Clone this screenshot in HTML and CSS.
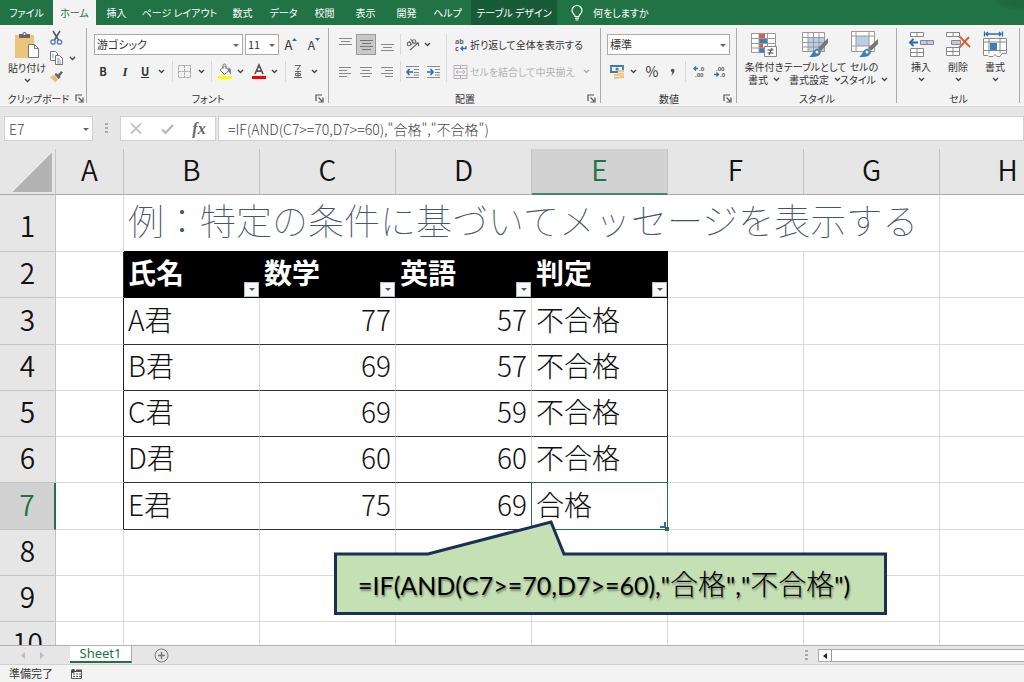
FILE: index.html
```html
<!DOCTYPE html>
<html lang="ja">
<head>
<meta charset="utf-8">
<title>Sheet1</title>
<meta name="viewport" content="width=device-width, initial-scale=1">
<link rel="stylesheet" href="styles.css">
</head>
<body>
<svg class="defs" aria-hidden="true">
  <symbol id="chev" viewBox="0 0 7 5"><path d="M1 1l2.500 2.500L6 1" fill="none" stroke="#444" stroke-width="1.300"/></symbol>
  <symbol id="launch" viewBox="0 0 9 9"><path d="M1 7V1h6M3.500 3.500L7 7M8 3.500V8H3.500" fill="none" stroke="#555" stroke-width="1.200"/></symbol>
</svg>
<div class="app">
  <nav class="tabs">
    <button class="t-file">ファイル</button>
    <button class="t-home active">ホーム</button>
    <button>挿入</button>
    <button class="t-page">ページ レイアウト</button>
    <button>数式</button>
    <button>データ</button>
    <button>校閲</button>
    <button>表示</button>
    <button>開発</button>
    <button>ヘルプ</button>
    <button class="t-design">テーブル デザイン</button>
    <button class="t-tell"><svg width="12" height="16" viewBox="0 0 12 16" fill="none" stroke="#fff" stroke-width="1.200"><path d="M4 11.500C4 9 1 8.500 1 5.500a5 5 0 0 1 10 0C11 8.500 8 9 8 11.500zM4 13.200h4M4.500 15h3"/></svg>何をしますか</button>
  </nav>

  <div class="ribbon">
    <section class="group g-clip">
      <div class="clip-body">
        <button class="big">
          <svg width="26" height="28" viewBox="0 0 26 28"><path d="M1 4h19v23H1z" fill="#ecc57c"/><path d="M5 3h3.500a2 2 0 0 1 4 0H16v4H5z" fill="#666"/><circle cx="10.500" cy="3" r="1" fill="#f3f3f3"/><path d="M14.500 13.500h6l4 4v9h-10z" fill="#fff" stroke="#777"/><path d="M20.500 13.500v4h4" fill="none" stroke="#777"/></svg>
          <span>貼り付け</span>
          <svg width="7" height="5"><use href="#chev"/></svg>
        </button>
        <div class="clip-side">
          <button aria-label="切り取り"><svg width="13" height="14" viewBox="0 0 13 14" fill="none"><path d="M3 0l5.500 9M10 0L4.500 9" stroke="#555" stroke-width="1.500"/><circle cx="3" cy="11" r="2.200" stroke="#4a7fb8" stroke-width="1.300"/><circle cx="9.500" cy="11" r="2.200" stroke="#4a7fb8" stroke-width="1.300"/></svg></button>
          <button aria-label="コピー"><svg width="13" height="14" viewBox="0 0 13 14" fill="#fff" stroke="#777"><path d="M.5.5h5l2 2v7h-7z"/><path d="M5.500 4.500h4l3 3v6h-7z"/><path d="M2 4h2M2 6h2M7 8h3M7 10h4M7 12h4" stroke="#4a7fb8" stroke-width=".8"/></svg></button>
          <button class="more" aria-label="コピーの種類"><svg width="7" height="5"><use href="#chev"/></svg></button>
          <button aria-label="書式のコピー"><svg width="13" height="12" viewBox="0 0 13 12"><path d="M0 6l4-2 4 4-2.500 3.500z" fill="#e9bd76"/><path d="M4.500 3.500L6 2l2 1.500L11 0l2 1.500L10 5l.5 1.500L8.500 8z" fill="#666"/></svg></button>
        </div>
      </div>
      <footer><span>クリップボード</span><svg width="9" height="9"><use href="#launch"/></svg></footer>
    </section>

    <section class="group g-font">
      <div class="rows">
        <div class="row font-a">
          <label class="drop"><select aria-label="フォント名"><option>游ゴシック</option></select></label>
          <label class="drop size"><select aria-label="フォント サイズ"><option>11</option></select></label>
          <button aria-label="拡大" class="grow">A<svg width="5" height="3" viewBox="0 0 5 3"><path d="M0 3l2.500-3L5 3z" fill="#2b6cb0"/></svg></button>
          <button aria-label="縮小" class="grow small">A<svg width="5" height="3" viewBox="0 0 5 3"><path d="M0 0l2.500 3L5 0z" fill="#2b6cb0"/></svg></button>
        </div>
        <div class="row font-b">
          <button class="b">B</button><button class="i">I</button><button class="u">U</button>
          <button aria-label="下線"><svg width="7" height="5"><use href="#chev"/></svg></button>
          <i class="sep"></i>
          <button aria-label="罫線"><svg width="13" height="13" viewBox="0 0 13 13" fill="none" stroke="#aaa"><path d="M.5.5h12v12H.5zM6.500 0v13M0 6.500h13" stroke-dasharray="3 .6"/></svg></button>
          <button aria-label="罫線の種類"><svg width="7" height="5"><use href="#chev"/></svg></button>
          <i class="sep"></i>
          <button aria-label="塗りつぶし"><svg width="14" height="15" viewBox="0 0 14 15"><path d="M2 6l4.500-4L11 6.500 6.500 10.500z" fill="#fff" stroke="#777"/><path d="M5 5V1.500a1.500 1.500 0 0 1 3 0V5" fill="none" stroke="#777"/><path d="M10 3.500c3 .5 3.500 3 2.500 7L10.500 7z" fill="#4a7fb8"/><path d="M0 12h14v3H0z" fill="#ff0"/></svg></button>
          <button aria-label="塗りつぶしの色"><svg width="7" height="5"><use href="#chev"/></svg></button>
          <button aria-label="フォントの色"><svg width="14" height="15" viewBox="0 0 14 15"><path d="M3 10L7 1l4 9M4.500 7.200h5" fill="none" stroke="#555" stroke-width="1.700"/><path d="M0 12h14v3H0z" fill="red"/></svg></button>
          <button aria-label="色の選択"><svg width="7" height="5"><use href="#chev"/></svg></button>
          <i class="sep"></i>
          <button aria-label="ふりがな"><svg width="8" height="13" viewBox="0 0 8 13" fill="none" stroke="#666"><path d="M1 .5h5.500L3 5M4 3v2M1 6.500h6M1.500 8.500h5v2h-5zM4 6.500v6M0 12.500h8"/></svg></button>
          <button aria-label="ふりがなの表示"><svg width="7" height="5"><use href="#chev"/></svg></button>
        </div>
      </div>
      <footer><span>フォント</span><svg width="9" height="9"><use href="#launch"/></svg></footer>
    </section>

    <section class="group g-align">
      <div class="align-body">
        <div class="rows">
          <div class="row align-a">
            <button class="top" aria-label="上揃え"><svg width="13" height="8" viewBox="0 0 13 8" stroke="#888"><path d="M0 .5h13M2 3.500h9M0 6.500h13"/></svg></button>
            <button class="on" aria-label="上下中央揃え"><svg width="13" height="10" viewBox="0 0 13 10" stroke="#777"><path d="M0 .5h13M2 3.500h9M0 6.500h13M2 9.500h9"/></svg></button>
            <button class="bottom" aria-label="下揃え"><svg width="13" height="8" viewBox="0 0 13 8" stroke="#888"><path d="M0 .5h13M2 3.500h9M0 6.500h13"/></svg></button>
            <i class="sep"></i>
            <button aria-label="方向"><svg width="14" height="13" viewBox="0 0 14 13" fill="none" stroke="#666" stroke-width="1.100"><circle cx="3" cy="6" r="1.800"/><path d="M3 3l3 4M4.500 1l4 5"/><circle cx="8" cy="3.500" r="1.800"/><path d="M4 12l8-7M9.500 5H12.500v3"/></svg></button>
            <button aria-label="方向の選択"><svg width="7" height="5"><use href="#chev"/></svg></button>
          </div>
          <div class="row align-b">
            <button aria-label="左揃え"><svg width="12" height="10" viewBox="0 0 12 10" stroke="#888"><path d="M0 .5h12M0 3.500h8M0 6.500h12M0 9.500h8"/></svg></button>
            <button aria-label="中央揃え"><svg width="12" height="10" viewBox="0 0 12 10" stroke="#888"><path d="M0 .5h12M2 3.500h8M0 6.500h12M2 9.500h8"/></svg></button>
            <button aria-label="右揃え"><svg width="12" height="10" viewBox="0 0 12 10" stroke="#888"><path d="M0 .5h12M4 3.500h8M0 6.500h12M4 9.500h8"/></svg></button>
            <i class="sep"></i>
            <button aria-label="インデントを減らす"><svg width="14" height="12" viewBox="0 0 14 12" fill="none" stroke="#888"><path d="M0 .5h13M8 3.500h5M8 6.500h5M8 9h5M0 11.500h13"/><path d="M7 6H1M3.500 3L1 6l2.500 3" stroke="#2b6cb0" stroke-width="1.700"/></svg></button>
            <button aria-label="インデントを増やす"><svg width="14" height="12" viewBox="0 0 14 12" fill="none" stroke="#888"><path d="M0 .5h13M8 3.500h5M8 6.500h5M8 9h5M0 11.500h13"/><path d="M0 6h6M3.500 3L6 6 3.500 9" stroke="#2b6cb0" stroke-width="1.700"/></svg></button>
          </div>
        </div>
        <div class="rows wide">
          <div class="row"><button class="text"><svg width="15" height="18" viewBox="0 0 15 18"><text x="2" y="8" class="ic">ab</text><text x="2" y="15" class="ic">c</text><path d="M13 10v2.500H8M10 10.500l-2 2 2 2" fill="none" stroke="#2b6cb0" stroke-width="1.300"/></svg>折り返して全体を表示する</button></div>
          <div class="row"><button class="text" disabled><svg width="15" height="14" viewBox="0 0 15 14" fill="none" stroke="#b9aebb"><path d="M1 .5h13v13H1zM1 3.500h13M1 10.500h13M7.500 0v3.500M7.500 10.500V14M3 7h9M5 5L3 7l2 2M10 5l2 2-2 2"/></svg>セルを結合して中央揃え<svg class="end" width="7" height="5"><use href="#chev"/></svg></button></div>
        </div>
      </div>
      <footer><span>配置</span><svg width="9" height="9"><use href="#launch"/></svg></footer>
    </section>

    <section class="group g-num">
      <div class="rows">
        <div class="row"><label class="drop fmt"><select aria-label="表示形式"><option>標準</option></select></label></div>
        <div class="row num-b">
          <button aria-label="通貨"><svg width="14" height="14" viewBox="0 0 14 14"><path d="M1 1h12v6H1z" fill="#fff" stroke="#3d78b8" stroke-width="1.800"/><circle cx="7" cy="4" r="1.600" fill="#3d78b8"/><path d="M8 5h6v8H8z" fill="#ecc57c"/><path d="M4 9h5v5H4z" fill="#ecc57c"/><path d="M8 7.500h6M8 10h6M4 11.500h5" stroke="#f3f3f3" stroke-width=".8"/></svg></button>
          <button aria-label="通貨の種類"><svg width="7" height="5"><use href="#chev"/></svg></button>
          <button class="pct">%</button>
          <button aria-label="桁区切り"><svg width="5" height="8" viewBox="0 0 5 8"><path d="M1 1.500C2 0 4.500.5 4.500 2.500S3 7 .8 7.500C2 6.500 2.500 5 2 4.200 1 4 .6 2.600 1 1.500z" fill="#555"/></svg></button>
          <i class="sep"></i>
          <button aria-label="小数点以下の桁数を増やす"><svg width="12" height="15" viewBox="0 0 12 15"><path d="M5 4.500H1M3 2.500l-2 2 2 2" fill="none" stroke="#2b6cb0" stroke-width="1.300"/><text x="6" y="7" class="dec">.0</text><text x="2" y="13" class="dec">.00</text></svg></button>
          <button aria-label="小数点以下の桁数を減らす"><svg width="12" height="15" viewBox="0 0 12 15"><text x="2" y="7" class="dec">.00</text><path d="M0 10.500h4M2.500 8.500l2 2-2 2" fill="none" stroke="#2b6cb0" stroke-width="1.300"/><text x="6" y="13" class="dec">.0</text></svg></button>
        </div>
      </div>
      <footer><span>数値</span><svg width="9" height="9"><use href="#launch"/></svg></footer>
    </section>

    <section class="group g-style">
      <div class="bigs">
        <button class="big"><svg width="26" height="27" viewBox="0 0 26 27"><path d="M.5 2.500h24v19H.5z" fill="#fff" stroke="#999"/><path d="M8 3h6v4.500H8zM8 12.500h4V17H8z" fill="#d9603f"/><path d="M8 7.500h8V12H8zM8 17h6v4.500H8z" fill="#3f7dbd"/><path d="M.5 7.500h24M.5 12.500h24M.5 17h24M8 2.500v19M16.500 2.500v19" fill="none" stroke="#999"/><path d="M13.500 15.500h12v10h-12z" fill="#fff" stroke="#888"/><path d="M16.500 19h6M16.500 22h6M21 17l-3 7" stroke="#444"/></svg><span>条件付き</span><span>書式<svg width="7" height="5"><use href="#chev"/></svg></span></button>
        <button class="big"><svg width="26" height="27" viewBox="0 0 26 27"><path d="M.5 1.500h22v19H.5z" fill="#fff"/><path d="M6 6h17v15H6z" fill="#b9cfe6"/><path d="M.5 1.500h22v19H.5zM.5 6.500h22M.5 11.500h22M.5 16h22M6 1.500v19M11.500 1.500v19M17 1.500v19" fill="none" stroke="#999"/><path d="M26 7v5l-7 8-3-3z" fill="#777"/><path d="M15.500 17.500l3.500 3c-.5 5-6 6-12 5.500 3-1.500 4-7.500 8.500-8.500z" fill="#3f7dbd"/><circle cx="15" cy="21" r="1.500" fill="#fff"/></svg><span>テーブルとして</span><span>書式設定<svg width="7" height="5"><use href="#chev"/></svg></span></button>
        <button class="big"><svg width="27" height="27" viewBox="0 0 27 27"><path d="M.5.5h23v20H.5z" fill="#fff" stroke="#999"/><path d="M5 5h13v10H5z" fill="#b9cfe6"/><path d="M5 .5v20M18 .5v20M.5 5h23M.5 15h23" fill="none" stroke="#999"/><path d="M27 8v5l-7 7-3-3z" fill="#777"/><path d="M16.500 17.500l3.500 3c-.5 5-6 6-12 5.500 3-1.500 4-7.500 8.500-8.500z" fill="#3f7dbd"/><circle cx="16" cy="21" r="1.500" fill="#fff"/></svg><span>セルの</span><span>スタイル<svg width="7" height="5"><use href="#chev"/></svg></span></button>
      </div>
      <footer><span>スタイル</span></footer>
    </section>

    <section class="group g-cell">
      <div class="bigs">
        <button class="big"><svg width="26" height="27" viewBox="0 0 26 27" fill="#fff" stroke="#888"><path d="M2.500 1.500h13v4h-13zM9 1.500v4M2.500 17.500h13v8h-13zM2.500 21.500h13M9 17.500v8"/><path d="M12.500 9.500h13v4h-13z" fill="#b9cfe6"/><path d="M19 9.500v4"/><path d="M10 11.500H2M5.500 8L2 11.500 5.500 15" fill="none" stroke="#2b6cb0" stroke-width="1.900"/></svg><span>挿入</span><svg width="7" height="5"><use href="#chev"/></svg></button>
        <button class="big"><svg width="26" height="27" viewBox="0 0 26 27" fill="#fff" stroke="#888"><path d="M1.500 1.500h13v4h-13zM8 1.500v4M1.500 16.500h13v8h-13zM1.500 20.500h13M8 16.500v8"/><path d="M6.500 9.500h9v4h-9z" fill="#b9cfe6"/><path d="M14 5l11 11M24 6L14 17" fill="none" stroke="#d9603f" stroke-width="2"/></svg><span>削除</span><svg width="7" height="5"><use href="#chev"/></svg></button>
        <button class="big"><svg width="26" height="27" viewBox="0 0 26 27" fill="#fff" stroke="#888"><path d="M2.500.5v5M20.500.5v5M4 3h15M6 1L4 3l2 2M17 1l2 2-2 2" fill="none" stroke="#2b6cb0" stroke-width="1.300"/><path d="M1.500 7.500h23v15H20l-2 3h-3l-2-2-2 2H7l-1-1H1.500z"/><path d="M7 7.500v15M18 7.500v15M1.500 11h23M1.500 19.500h23" fill="none"/><path d="M8 12h7v7H8z" fill="#3f7dbd" stroke="none"/></svg><span>書式</span><svg width="7" height="5"><use href="#chev"/></svg></button>
      </div>
      <footer><span>セル</span></footer>
    </section>
  </div>

  <div class="formula-bar">
    <label class="drop name"><input aria-label="名前ボックス" value="E7"></label>
    <i class="dots"></i>
    <div class="fx">
      <button aria-label="キャンセル"><svg width="12" height="11" viewBox="0 0 12 11"><path d="M1 .5l10 10M11 .5l-10 10" stroke="#b5b5b5" stroke-width="1.500"/></svg></button>
      <button aria-label="入力"><svg width="13" height="10" viewBox="0 0 13 10"><path d="M1 5.500l3.500 3.500L12 1" fill="none" stroke="#b5b5b5" stroke-width="2.200"/></svg></button>
      <button class="fn"><em>fx</em></button>
    </div>
    <input class="formula" aria-label="数式" value="=IF(AND(C7&gt;=70,D7&gt;=60),&quot;合格&quot;,&quot;不合格&quot;)">
  </div>

  <main class="sheet">
    <table>
      <colgroup><col class="c-head"><col class="c-a"><col><col><col><col><col><col><col></colgroup>
      <thead><tr><th class="corner"></th><th>A</th><th>B</th><th>C</th><th>D</th><th class="sel">E</th><th>F</th><th>G</th><th>H</th></tr></thead>
      <tbody>
        <tr class="title-row"><th>1</th><td></td><td colspan="4" class="title">例：特定の条件に基づいてメッセージを表示する</td><td class="open"></td><td></td><td></td></tr>
        <tr class="head-row"><th>2</th><td class="edge"></td><td class="h">氏名<button aria-label="氏名 フィルター"></button></td><td class="h">数学<button aria-label="数学 フィルター"></button></td><td class="h">英語<button aria-label="英語 フィルター"></button></td><td class="h">判定<button aria-label="判定 フィルター"></button></td><td></td><td></td><td></td></tr>
        <tr><th>3</th><td class="edge"></td><td class="d">A君</td><td class="d n">77</td><td class="d n">57</td><td class="d last">不合格</td><td></td><td></td><td></td></tr>
        <tr><th>4</th><td class="edge"></td><td class="d">B君</td><td class="d n">69</td><td class="d n">57</td><td class="d last">不合格</td><td></td><td></td><td></td></tr>
        <tr><th>5</th><td class="edge"></td><td class="d">C君</td><td class="d n">69</td><td class="d n">59</td><td class="d last">不合格</td><td></td><td></td><td></td></tr>
        <tr><th>6</th><td class="edge"></td><td class="d">D君</td><td class="d n">60</td><td class="d n">60</td><td class="d last">不合格</td><td></td><td></td><td></td></tr>
        <tr><th class="sel">7</th><td class="edge"></td><td class="d">E君</td><td class="d n">75</td><td class="d n">69</td><td class="d last cursor">合格</td><td></td><td></td><td></td></tr>
        <tr><th>8</th><td></td><td></td><td></td><td></td><td></td><td></td><td></td><td></td></tr>
        <tr><th>9</th><td></td><td></td><td></td><td></td><td></td><td></td><td></td><td></td></tr>
        <tr><th>10</th><td></td><td></td><td></td><td></td><td></td><td></td><td></td><td></td></tr>
      </tbody>
    </table>
    <div class="callout">
      <svg width="553" height="94" viewBox="0 0 553 94"><path d="M1.500 33H94L217 1l13 32h321.500v59.500H1.500z" fill="#c5e0b4" stroke="#1b2f57" stroke-width="3"/></svg>
      <p>=IF(AND(C7&gt;=70,D7&gt;=60),"<span>合格</span>","<span>不合格</span>")</p>
    </div>
  </main>

  <div class="sheet-tabs">
    <button class="nav" aria-label="前のシート"><svg width="4" height="7" viewBox="0 0 4 7"><path d="M4 0v7L0 3.500z" fill="#bbb"/></svg></button>
    <button class="nav" aria-label="次のシート"><svg width="4" height="7" viewBox="0 0 4 7"><path d="M0 0v7l4-3.500z" fill="#bbb"/></svg></button>
    <button class="tab">Sheet1</button>
    <button class="add" aria-label="新しいシート"><svg width="15" height="15" viewBox="0 0 15 15" fill="none" stroke="#777"><circle cx="7.500" cy="7.500" r="6.500"/><path d="M7.500 4v7M4 7.500h7" stroke-width="1.500"/></svg></button>
    <i class="dots"></i>
    <div class="scroll"><button aria-label="左へスクロール"><svg width="4" height="6" viewBox="0 0 4 6"><path d="M4 0v6L0 3z" fill="#222"/></svg></button><i></i></div>
  </div>
  <div class="status"><span>準備完了</span><svg width="11" height="10" viewBox="0 0 11 10"><path d="M.5 2.500h10v7H.5z" fill="#fff" stroke="#555"/><path d="M5 .5h6v2H5z" fill="#555"/><circle cx="2" cy="2" r="2" fill="#444"/><path d="M2 5h2M5 5h2M8 5h2M2 7.500h2M5 7.500h2M8 7.500h2" stroke="#555"/></svg></div>
</div>
</body>
</html>
```

FILE: styles.css
```css
* { box-sizing: border-box; }
body { margin: 0; font-family: "Noto Sans CJK JP", sans-serif; font-size: 11px; line-height: 13px; color: #333; background: #fff; }
button, input, select { font: inherit; color: inherit; margin: 0; padding: 0; border: 0; background: none; border-radius: 0; }
svg { display: block; flex: none; overflow: visible; }
.defs { position: absolute; width: 0; height: 0; }
.app { height: 100vh; display: flex; flex-direction: column; overflow: hidden; }
.tabs, .ribbon { font-size: 10px; font-feature-settings: "palt"; white-space: nowrap; }

.tabs { flex: none; display: flex; height: 25px; background: radial-gradient(ellipse 30px 12px at 100% 0, #1f673c 60%, #1f673c00), #217346; color: #fff; }
.tabs button { width: 41px; flex: none; }
.tabs .t-file { width: 53px; }
.tabs .t-home { width: 43px; }
.tabs .t-page { width: 85px; }
.tabs .active { background: #f3f3f3; color: #217346; }
.tabs .t-design { width: 86px; margin-left: 3px; background: #185c37; }
.tabs .t-tell { width: auto; margin-left: 14px; display: flex; align-items: center; gap: 10px; }

.ribbon { flex: none; display: flex; height: 82px; padding: 3px 0 1px; background: #f3f3f3; border-bottom: 1px solid #dadada; overflow: hidden; }
.group { flex: none; display: flex; flex-direction: column; background: linear-gradient(#ababab, #ababab) right top / 1px 75px no-repeat; }
.group > :first-child { flex: 1; }
.group footer { display: grid; grid-template-columns: 14px 1fr 14px; align-items: center; height: 14px; }
.group footer span { grid-column: 2; text-align: center; }
.g-clip { width: 87px; }
.g-clip footer { grid-template-columns: 2px 1fr 12px; }
.g-font { width: 242px; }
.g-align { width: 272px; }
.g-num { width: 136px; }
.g-style { width: 160px; }
.g-cell { width: 123px; }

.group button { display: flex; align-items: center; justify-content: center; min-width: 0; }
.group .big { flex-direction: column; justify-content: flex-start; align-items: center; }
.big > svg:first-child { margin-bottom: 2px; }
.big span { display: flex; align-items: center; gap: 5px; }
.big > svg:last-child { margin-top: 4px; }
.clip-body { display: flex; padding: 3px 0 0 7px; }
.clip-body .big { width: 40px; }
.clip-side { display: grid; grid-template-columns: 18px 14px; grid-template-rows: 14px 26px 12px; align-items: center; }
.clip-side button { grid-column: 1; }
.clip-side .more { grid-column: 2; grid-row: 2; }

.rows { display: flex; flex-direction: column; gap: 6px; padding: 6px 6px 0 7px; }
.row { display: grid; height: 21px; align-items: stretch; }
.font-a { grid-template-columns: 149px 34px 20px 22px; column-gap: 2px; }
.font-b { grid-template-columns: 18px 26px 14px 18px 4px 21px 12px 8px 19px 12px 25px 7px 14px 12px 20px; }
.align-a { grid-template-columns: 22px 20px 22px 5px 19px 10px; }
.align-b { grid-template-columns: 22px 20px 22px 5px 19px 24px; }
.num-b { grid-template-columns: 20px 12px 26px 14px 12px 15px 28px; }
.g-num .rows { padding-left: 6px; }
.sep { width: 1px; background: #d8d8d8; justify-self: center; }

.drop { position: relative; display: block; background: #fff; border: 1px solid #ababab; }
.drop select, .drop input { appearance: none; display: block; width: 100%; height: 100%; padding: 0 12px 0 2px; outline: 0; }
.drop select { font-size: 11px; font-feature-settings: "palt"; }
.drop::after { content: ""; position: absolute; right: 3px; top: 50%; margin-top: -1px; border: 3px solid transparent; border-top-color: #666; border-bottom: 0; pointer-events: none; }
.fmt { width: 123px; }
.group .grow { font-size: 13px; }
.grow svg { align-self: flex-start; margin-top: 4px; }
.group .small { font-size: 12px; }
.b { font-weight: 700; }
.group .b, .group .u { font-size: 11px; }
.group .i { font-family: "Liberation Serif", serif; font-style: italic; font-weight: 700; font-size: 13px; }
.u { font-weight: 700; text-decoration: underline; }
.group .pct { font-size: 14px; }
.group .top { padding-bottom: 6px; }
.on { background: #c8c8c8; }
.group .on { border: 1px solid #9a9a9a; }
.group .bottom { padding-top: 6px; }
.align-body { display: flex; }
.align-body .rows { width: 117px; padding: 6px 0 0 5px; }
.align-body .wide { width: 150px; padding-left: 7px; background: linear-gradient(#d8d8d8, #d8d8d8) left 6px / 1px 48px no-repeat; }
.group .text { justify-content: flex-start; gap: 2px; }
.text:disabled { color: #b3b3b3; }
.text .end { margin-left: 6px; opacity: .4; }
.ic { font: 700 7px "Noto Sans", sans-serif; fill: #666; }
.dec { font: 700 6px "Noto Sans", sans-serif; fill: #666; }
.bigs { display: grid; padding-top: 3px; }
.g-style .bigs { grid-template-columns: 50px 52px 46px; padding-left: 2px; }
.g-cell .bigs { grid-template-columns: 38px 36px 38px; padding-left: 5px; }

.formula-bar { flex: none; display: flex; height: 42px; padding: 9px 0 8px 4px; background: #e6e6e6; color: #444; font-size: 14px; font-weight: 300; }
.formula-bar > * { border: 1px solid #d0d0d0; background: #fff; }
.name { width: 89px; }
.name input { padding-left: 4px; }
.formula-bar .dots, .sheet-tabs .dots { width: 3px; height: 11px; border: 0; background: repeating-linear-gradient(#aaa 0 2px, transparent 2px 4px); align-self: center; }
.formula-bar .dots { margin: 0 12px; }
.fx { display: grid; grid-template-columns: 30px 32px 32px; margin-right: 2px; }
.fx button { display: flex; align-items: center; justify-content: center; }
.fx .fn { font-family: "Liberation Serif", serif; font-size: 16px; font-weight: 700; color: #666; }
.formula-bar .formula { flex: 1; min-width: 0; padding-left: 9px; }

.sheet { position: relative; flex: 1; min-height: 0; overflow: hidden; font-size: 28px; line-height: 40px; font-weight: 300; color: #111; }
table { table-layout: fixed; width: 1076px; border-collapse: separate; border-spacing: 0; }
col { width: 136px; }
.c-head { width: 56px; }
.c-a { width: 68px; }
th, td { height: 46px; padding: 0 0 5px; border-right: 1px solid #dadada; border-bottom: 1px solid #dadada; }
th { font-weight: 350; background: #e6e6e6; border-color: #c4c4c4; text-align: center; }
thead th { border-bottom-color: #ababab; }
tbody tr:nth-child(4n+3) > * { height: 47px; }
.corner { background: linear-gradient(135deg, transparent 50%, #b3b3b3 50%) 13px 4px / 39px 39px no-repeat #e6e6e6; }
.sel { background: #d2d2d2; color: #217346; }
thead .sel { padding-bottom: 4px; border-bottom: 2px solid #3f8a60; }
tbody .sel { border-right: 2px solid #217346; }
tbody .title-row > * { height: 57px; }
.title-row th { padding-top: 8px; }
td { padding-left: 4px; white-space: nowrap; }
.title { padding-bottom: 8px; font-size: 36px; font-weight: 100; color: #44546a; border-right: 0; border-bottom-color: #000; }
.open { border-right: 0; }
.edge { border-right-color: #222; }
.h { position: relative; background: #000; border-color: #000; color: #fff; font-weight: 700; }
.h button { position: absolute; right: 0; bottom: 0; width: 15px; height: 15px; background: #f7f8fa; border: 1px solid #b8bcc4; }
.h button::after { content: ""; display: block; width: 0; margin: 0 auto; border: 3px solid transparent; border-top-color: #555; border-bottom: 0; }
.d { border-bottom-color: #333; }
.n { text-align: right; padding-right: 4px; }
.last { border-right-color: #333; }
.cursor { position: relative; }
.cursor::before { content: ""; position: absolute; inset: -1px; border: 1px solid #217346; }
.cursor::after { content: ""; position: absolute; right: -2px; bottom: -2px; width: 9px; height: 9px; background: linear-gradient(#217346, #217346) right bottom / 4px 4px no-repeat, linear-gradient(#4060b8, #4060b8) 0 4px / 5px 2px no-repeat, linear-gradient(#4060b8, #4060b8) 4px 0 / 2px 5px no-repeat; }

.callout { position: absolute; left: 334px; top: 372px; width: 553px; }
.callout p { position: absolute; left: 24px; top: 42px; margin: 0; font-family: Lato, "Noto Sans CJK JP", sans-serif; font-size: 25px; font-weight: 400; font-kerning: none; color: #000; white-space: nowrap; text-shadow: 1px 2px 2px #0006; }
.callout span { font-family: "Noto Sans CJK JP", sans-serif; font-size: 28px; font-weight: 300; }

.sheet-tabs { flex: none; display: flex; align-items: stretch; height: 20px; padding-left: 13px; background: #e6e6e6; border-top: 1px solid #b0b0b0; border-bottom: 1px solid #d0d0d0; }
.sheet-tabs button { display: flex; align-items: center; justify-content: center; }
.nav { width: 19px; }
.sheet-tabs .tab { width: 62px; height: 17px; margin-left: 19px; background: #fff; border-bottom: 2px solid #217346; border-right: 1px solid #ababab; color: #217346; font-family: "Noto Sans", sans-serif; font-size: 13px; line-height: 15px; }
.add { width: 58px; }
.sheet-tabs .dots { margin-left: auto; margin-right: 10px; }
.scroll { display: flex; width: 206px; margin: 3px 0 2px; border: 1px solid #ababab; border-right: 0; background: #fff; }
.scroll button { width: 12px; }
.scroll i { flex: 1; border-left: 1px solid #999; }
.status { flex: none; display: flex; align-items: center; gap: 18px; height: 17px; padding-left: 9px; background: #f3f3f3; }
```
